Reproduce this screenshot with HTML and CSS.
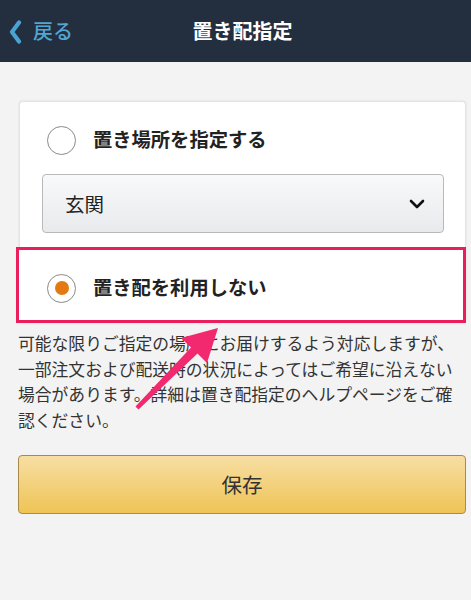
FILE: index.html
```html
<!DOCTYPE html>
<html lang="ja">
<head>
<meta charset="utf-8">
<link rel="stylesheet" href="styles.css">
</head>
<body>
<header class="topbar">
  <div class="back">
    <svg class="back-icon" width="13" height="24" viewBox="0 0 13 24"><polyline points="10,2.5 3,12 10,21.5" fill="none" stroke="#4aa3d3" stroke-width="4.2" stroke-linecap="round" stroke-linejoin="round"/></svg>
    <span class="back-text">戻る</span>
  </div>
  <h1 class="title">置き配指定</h1>
</header>
<main class="content">
  <section class="card">
    <div class="row first">
      <span class="radio"></span>
      <span class="label">置き場所を指定する</span>
    </div>
    <div class="select">
      <span class="select-text">玄関</span>
      <svg class="chev" width="16" height="10" viewBox="0 0 16 10"><polyline points="2,2 8,8 14,2" fill="none" stroke="#111" stroke-width="2.6" stroke-linecap="round" stroke-linejoin="round"/></svg>
    </div>
    <div class="row second">
      <span class="radio checked"><span class="dot"></span></span>
      <span class="label">置き配を利用しない</span>
    </div>
  </section>
  <p class="note">可能な限りご指定の場所にお届けするよう対応しますが、<br>一部注文および配送時の状況によってはご希望に沿えない<br>場合があります。詳細は置き配指定のヘルプページをご確<br>認ください。</p>
  <button class="save">保存</button>
</main>
<svg class="arrow" width="471" height="600" viewBox="0 0 471 600">
  <polygon points="218,328 207,363 197.5,353.5 138.5,409.5 135.5,406.5 191,347.5 181,338" fill="#f2296e"/>
</svg>
</body>
</html>
```
FILE: styles.css
```css
* { box-sizing: border-box; }
html, body { margin: 0; padding: 0; }
body {
  width: 471px;
  height: 600px;
  background: #f3f3f3;
  font-family: "Noto Sans CJK JP", "Noto Sans", sans-serif;
  color: #222;
  position: relative;
  overflow: hidden;
}
.topbar {
  height: 62px;
  background: #232f3e;
  display: flex;
  align-items: center;
  position: relative;
}
.back {
  display: flex;
  align-items: center;
  padding-left: 9px;
  gap: 11px;
  margin-top: 2px;
}
.back-icon { display: block; }
.back-text {
  color: #52a6d3;
  font-size: 20px;
  line-height: 1;
  font-weight: 500;
  margin-top: -3px;
}
.title {
  position: absolute;
  left: 0;
  right: 0;
  margin: 0;
  text-align: center;
  padding-left: 14px;
  color: #fff;
  font-size: 20px;
  font-weight: 700;
  line-height: 62px;
}
.content {
  padding: 39px 5px 0 18px;
}
.card {
  margin-left: 1px;
  background: #fff;
  border-radius: 4px;
  box-shadow: 0 0 2px rgba(0,0,0,0.12);
  border: 1px solid #e4e4e4;
  border-bottom: none;
}
.row {
  display: flex;
  align-items: center;
  gap: 17px;
}
.row.first {
  height: 72px;
  padding: 4px 0 0 27px;
}
.radio {
  width: 29px;
  height: 29px;
  border-radius: 50%;
  border: 1.4px solid #8a8a8a;
  background: #fff;
  display: flex;
  align-items: center;
  justify-content: center;
  flex: none;
}
.dot {
  width: 14px;
  height: 14px;
  border-radius: 50%;
  background: #e47911;
}
.label {
  font-size: 19.3px;
  font-weight: 700;
  color: #222;
  line-height: 1;
}
.select {
  margin: 0 21px 0 22px;
  height: 59px;
  border: 1px solid #b9b9b9;
  border-radius: 4px;
  background: linear-gradient(#f8f9fa, #e8eaed);
  display: flex;
  align-items: center;
  justify-content: space-between;
  padding: 0 18px 0 22px;
}
.select-text {
  font-size: 19.5px;
  color: #222;
}
.chev { display: block; }
.row.second {
  margin: 14px -1px 0 -4px;
  height: 76px;
  border: 3px solid #ea1d5d;
  padding: 6px 0 0 28px;
  background: #fff;
}
.note {
  margin: 8px 0 0 0;
  font-size: 16.8px;
  line-height: 25.7px;
  color: #333;
  white-space: nowrap;
}
.save {
  display: block;
  width: 448px;
  height: 59px;
  margin-top: 21px;
  border: 1px solid #a88a4a;
  border-radius: 4px;
  background: linear-gradient(#f7dea4, #efc455);
  font-family: "Noto Sans CJK JP", "Noto Sans", sans-serif;
  font-size: 20.5px;
  color: #333;
  padding: 0;
}
.arrow {
  position: absolute;
  top: 0;
  left: 0;
  pointer-events: none;
}
```
